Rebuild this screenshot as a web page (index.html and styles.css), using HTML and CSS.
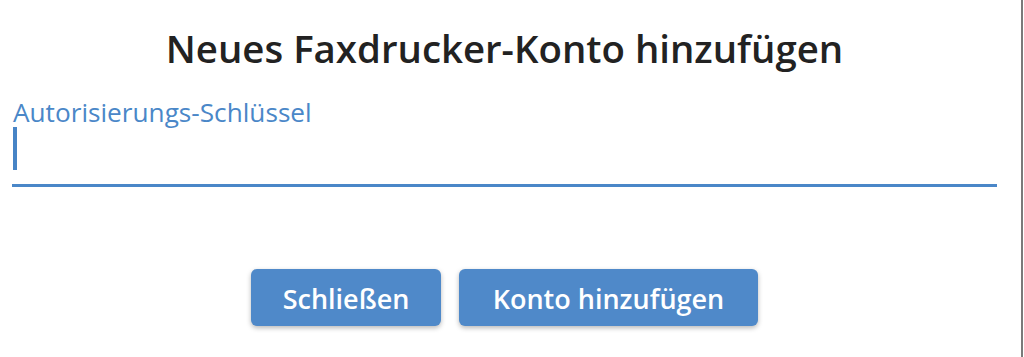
FILE: index.html
```html
<!DOCTYPE html>
<html lang="de">
<head>
<meta charset="utf-8">
<title>Neues Faxdrucker-Konto hinzufügen</title>
<link rel="stylesheet" href="styles.css">
</head>
<body>
<div class="frame">
  <div class="dialog">
    <h1 class="title">Neues Faxdrucker-Konto hinzufügen</h1>
    <label class="field-label" for="key">Autorisierungs-Schlüssel</label>
    <div class="field">
      <span class="caret"></span>
    </div>
    <div class="actions">
      <button class="btn btn-close">Schließen</button>
      <button class="btn btn-add">Konto hinzufügen</button>
    </div>
  </div>
</div>
</body>
</html>
```
FILE: styles.css
```css
html, body {
  margin: 0;
  padding: 0;
  background: #ffffff;
}
body {
  font-family: "Open Sans", "Noto Sans", sans-serif;
  width: 1024px;
  height: 357px;
  overflow: hidden;
}
.frame {
  width: 1021px;
  height: 357px;
  border-right: 2px solid #7a7a7a;
  box-sizing: content-box;
}
.dialog {
  width: 1009px;
  box-sizing: border-box;
  padding: 25px 12px 0 12px;
  display: flex;
  flex-direction: column;
}
.title {
  margin: 0;
  font-size: 38.4px;
  line-height: 46px;
  font-weight: 600;
  color: #222222;
  text-align: center;
}
.field-label {
  margin-top: 26px;
  padding-left: 1px;
  font-size: 26.2px;
  line-height: 30px;
  font-weight: 400;
  color: #4a87c8;
}
.field {
  height: 57px;
  border-bottom: 3px solid #4a87c8;
  display: flex;
  align-items: flex-start;
}
.caret {
  display: block;
  width: 4px;
  height: 43px;
  margin-left: 1px;
  background: #4784c6;
}
.actions {
  margin-top: 82px;
  display: flex;
  justify-content: center;
  gap: 18px;
}
.btn {
  height: 57px;
  padding: 2px 0 0 0;
  box-sizing: border-box;
  border: none;
  border-radius: 6px;
  background: #4f89c9;
  color: #ffffff;
  font-family: "Open Sans", "Noto Sans", sans-serif;
  font-size: 27px;
  line-height: 55px;
  font-weight: 600;
  box-shadow: 0 2px 5px rgba(0, 0, 0, 0.28);
  text-align: center;
}
.btn-close {
  width: 190px;
}
.btn-add {
  width: 299px;
}
```
